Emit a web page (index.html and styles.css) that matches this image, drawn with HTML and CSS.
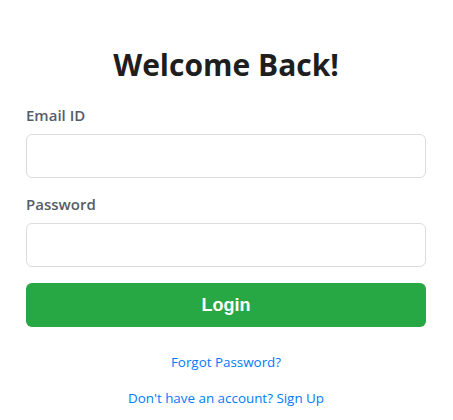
FILE: index.html
```html
<!DOCTYPE html>
<html>
<head>
<meta charset="utf-8">
<link rel="stylesheet" href="styles.css">
</head>
<body>
<div class="card">
  <h1 class="title">Welcome Back!</h1>
  <form class="form">
    <div class="field">
      <label class="label">Email ID</label>
      <input class="input" type="text">
    </div>
    <div class="field">
      <label class="label">Password</label>
      <input class="input" type="password">
    </div>
    <button class="btn" type="button">Login</button>
  </form>
  <div class="links">
    <a class="link" href="#">Forgot Password?</a>
    <a class="link" href="#">Don't have an account? Sign Up</a>
  </div>
</div>
</body>
</html>
```
FILE: styles.css
```css
* { box-sizing: border-box; }
body {
  margin: 0;
  background: #fff;
  font-family: "Open Sans", "Noto Sans", sans-serif;
}
.card {
  width: 400px;
  margin: 0 27px 0 26px;
  padding-top: 45px;
}
.title {
  margin: 0 0 19px;
  text-align: center;
  font-size: 30px;
  font-weight: 700;
  color: #1e1e1e;
  line-height: 40px;
}
.form {
  display: flex;
  flex-direction: column;
}
.field {
  display: flex;
  flex-direction: column;
  margin-bottom: 15px;
}
.field + .field {
  margin-bottom: 16px;
}
.label {
  font-size: 15px;
  line-height: 22px;
  font-weight: 600;
  color: #555d66;
  margin-bottom: 8px;
}
.input {
  height: 44px;
  border: 1px solid #dcdcdc;
  border-radius: 6px;
  font-size: 16px;
  padding: 0 12px;
}
.btn {
  height: 44px;
  border: none;
  border-radius: 6px;
  background: #28a745;
  color: #fff;
  font-family: "Liberation Sans", Arial, sans-serif;
  font-size: 18px;
  font-weight: 700;
}
.links {
  display: flex;
  flex-direction: column;
  align-items: center;
  gap: 17px;
  margin-top: 26px;
}
.link {
  font-size: 13.4px;
  line-height: 19px;
  color: #007bff;
  text-decoration: none;
}
```
